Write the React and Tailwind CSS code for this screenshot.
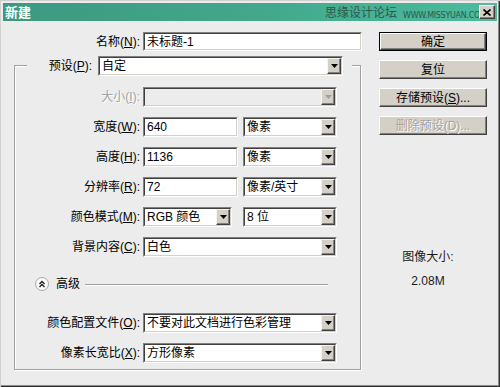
import React from "react";

const FONT = "font-['Liberation_Sans','Noto_Sans_CJK_SC',sans-serif]";
const DIS = "text-[#a3a3a3] [text-shadow:1px_1px_0_#ffffff]";

function Arrow({ disabled }) {
  return (
    <div className="w-[14px] h-full shrink-0 bg-[#d4d0c8] border border-t-[#f4f4f4] border-l-[#f4f4f4] border-b-[#404040] border-r-[#404040] shadow-[inset_-1px_-1px_0_#808080] flex items-center justify-center">
      <svg width="7" height="4" viewBox="0 0 7 4">
        <path d="M0 0H7L3.5 4Z" fill={disabled ? "#a0a0a0" : "#000"} />
      </svg>
    </div>
  );
}

function Field({ w, h = "h-[20px]", children, select, disabled }) {
  return (
    <div className={`${w} ${h} shrink-0 flex border border-t-[#808080] border-l-[#808080] border-b-white border-r-white`}>
      <div
        className={`flex-1 min-w-0 flex items-stretch ${disabled ? "bg-[#ececec]" : "bg-white"} border border-t-[#404040] border-l-[#404040] border-b-[#d4d0c8] border-r-[#d4d0c8]`}
      >
        <span className="flex-1 min-w-0 flex items-center pl-[2px] whitespace-nowrap overflow-hidden">{children}</span>
        {select && <Arrow disabled={disabled} />}
      </div>
    </div>
  );
}

function Btn({ children, def, disabled, className = "" }) {
  const inner = (
    <div className="h-full w-full bg-[#d4d0c8] border border-t-white border-l-white border-b-[#404040] border-r-[#404040] shadow-[inset_-1px_-1px_0_#808080] flex items-center justify-center">
      <span className={disabled ? DIS : ""}>{children}</span>
    </div>
  );
  return (
    <div className={`h-[19px] w-[108px] ${def ? "border border-black" : ""} ${className}`}>{inner}</div>
  );
}

function Row({ label, children, className = "", disabled }) {
  return (
    <div className={`flex items-center h-[20px] ${className}`}>
      <span className={`w-[125px] text-right whitespace-nowrap ${disabled ? DIS : ""}`}>{label}</span>
      <div className="ml-[3px] flex items-center">{children}</div>
    </div>
  );
}

export default function App() {
  return (
    <div
      className={`${FONT} relative w-[500px] h-[387px] bg-[#ececec] text-[12px] leading-[16px] text-black overflow-hidden flex flex-col shadow-[inset_1px_1px_0_#d0d0d0,inset_-1px_-1px_0_#303030,inset_-2px_-2px_0_#8a8a8a]`}
    >
      {/* Title bar */}
      <div className="relative mx-[3px] mt-[3px] h-[18px] shrink-0 bg-linear-to-r from-[#3b9980] via-[#42a78b] to-[#4cbb9e] flex items-center">
        <span className="pl-[2px] text-white font-bold text-[13px] leading-none">新建</span>
        <div className="absolute left-[322px] top-[4px] flex items-end">
          <span className="text-[12px] leading-[13px] text-[#2f564b]">思缘设计论坛</span>
          <span className="ml-[6px] font-['DejaVu_Sans',sans-serif] text-[8px] leading-[9px] tracking-[-0.3px] text-[#2f564b]">
            WWW.MISSYUAN.COM
          </span>
        </div>
        <div className="absolute left-[476px] top-[2px] w-[16px] h-[14px] bg-[#d4d0c8] border border-t-white border-l-white border-b-[#404040] border-r-[#404040] shadow-[inset_-1px_-1px_0_#808080] flex items-center justify-center">
          <svg width="8" height="7" viewBox="0 0 8 7">
            <path d="M0.5 0.5L7.5 6.5M7.5 0.5L0.5 6.5" stroke="#000" strokeWidth="1.6" />
          </svg>
        </div>
      </div>

      {/* Body */}
      <div className="flex flex-1">
        {/* Left column */}
        <div className="ml-[14px] w-[348px] flex flex-col">
          <div className="mt-[11px] h-[19px] flex items-center">
            <span className="w-[126px] text-right">
              名称(<u>N</u>):
            </span>
            <div className="ml-[3px]">
              <Field w="w-[219px]" h="h-[19px]">未标题-1</Field>
            </div>
          </div>

          <div className="mt-[14px] w-[347px] border border-[#a0a0a0] shadow-[1px_1px_0_#ffffff,inset_1px_1px_0_#ffffff] pb-[6px]">
            <div className="-mt-[10px] ml-[12px] w-[325px] h-[20px] bg-[#ececec] flex items-center">
              <span className="w-[65px] text-right">
                预设(<u>P</u>):
              </span>
              <div className="ml-[6px]">
                <Field w="w-[245px]" select>
                  自定
                </Field>
              </div>
            </div>

            <Row
              className="mt-[11px]"
              disabled
              label={
                <>
                  大小(<u>I</u>):
                </>
              }
            >
              <Field w="w-[194px]" select disabled />
            </Row>

            <Row
              className="mt-[10px]"
              label={
                <>
                  宽度(<u>W</u>):
                </>
              }
            >
              <Field w="w-[95px]">640</Field>
              <div className="ml-[5px]">
                <Field w="w-[94px]" select>
                  像素
                </Field>
              </div>
            </Row>

            <Row
              className="mt-[10px]"
              label={
                <>
                  高度(<u>H</u>):
                </>
              }
            >
              <Field w="w-[95px]">1136</Field>
              <div className="ml-[5px]">
                <Field w="w-[94px]" select>
                  像素
                </Field>
              </div>
            </Row>

            <Row
              className="mt-[10px]"
              label={
                <>
                  分辨率(<u>R</u>):
                </>
              }
            >
              <Field w="w-[95px]">72</Field>
              <div className="ml-[5px]">
                <Field w="w-[94px]" select>
                  像素/英寸
                </Field>
              </div>
            </Row>

            <Row
              className="mt-[10px]"
              label={
                <>
                  颜色模式(<u>M</u>):
                </>
              }
            >
              <Field w="w-[89px]" select>
                RGB 颜色
              </Field>
              <div className="ml-[11px]">
                <Field w="w-[94px]" select>
                  8 位
                </Field>
              </div>
            </Row>

            <Row
              className="mt-[10px]"
              label={
                <>
                  背景内容(<u>C</u>):
                </>
              }
            >
              <Field w="w-[194px]" select>
                白色
              </Field>
            </Row>

            <div className="mt-[20px] h-[14px] flex items-center pl-[20px] pr-[32px]">
              <svg width="14" height="14" viewBox="0 0 14 14" className="shrink-0">
                <circle cx="7" cy="7" r="6.5" fill="#fbfbfb" stroke="#a8a8a8" />
                <path d="M4.5 7L7 4.5L9.5 7M4.5 10L7 7.5L9.5 10" fill="none" stroke="#222" strokeWidth="1.4" />
              </svg>
              <span className="ml-[7px]">高级</span>
              <div className="ml-[5px] flex-1 h-0 border-t border-[#a0a0a0] shadow-[0_1px_0_#ffffff]" />
            </div>

            <Row
              className="mt-[22px]"
              label={
                <>
                  颜色配置文件(<u>O</u>):
                </>
              }
            >
              <Field w="w-[194px]" select>
                不要对此文档进行色彩管理
              </Field>
            </Row>

            <Row
              className="mt-[10px]"
              label={
                <>
                  像素长宽比(<u>X</u>):
                </>
              }
            >
              <Field w="w-[194px]" select>
                方形像素
              </Field>
            </Row>
          </div>
        </div>

        {/* Right column */}
        <div className="ml-[17px] w-[108px] flex flex-col pt-[11px]">
          <Btn def>确定</Btn>
          <Btn className="mt-[9px]">复位</Btn>
          <Btn className="mt-[9px]">
            存储预设(<u>S</u>)...
          </Btn>
          <Btn className="mt-[9px]" disabled>
            删除预设(D)...
          </Btn>
          <div className="mt-[114px] pr-[10px] text-center text-[#1a1a1a]">图像大小:</div>
          <div className="mt-[8px] pr-[10px] text-center text-[#1a1a1a]">2.08M</div>
        </div>
      </div>
    </div>
  );
}
